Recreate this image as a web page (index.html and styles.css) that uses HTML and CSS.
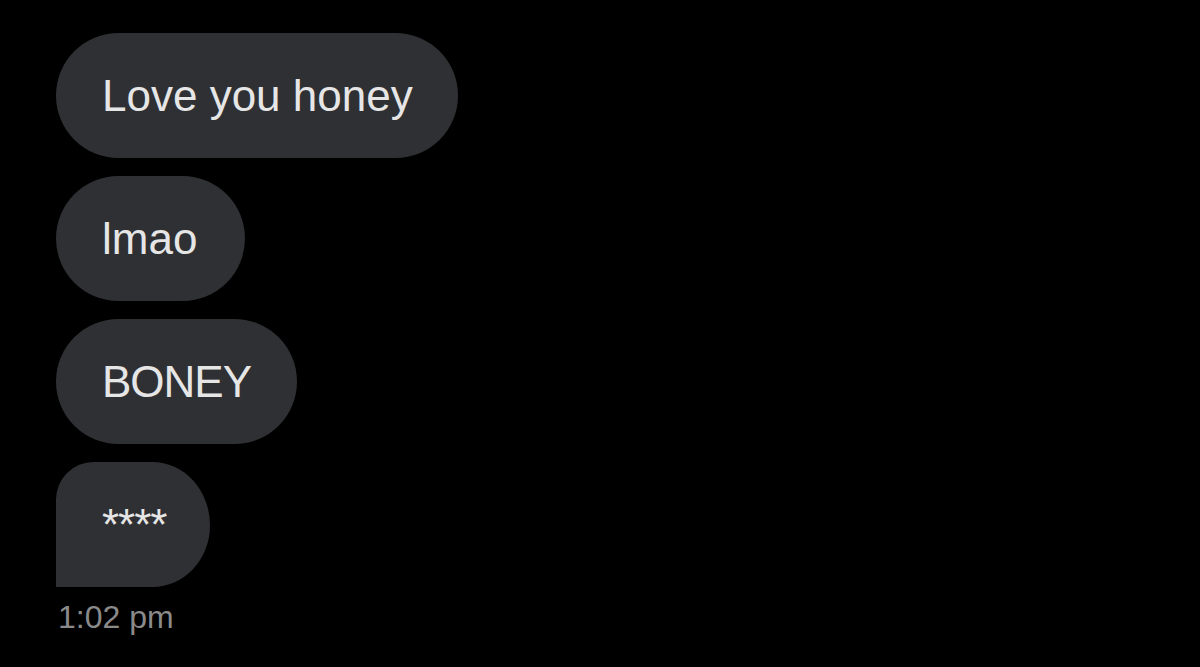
FILE: index.html
```html
<!DOCTYPE html>
<html lang="en">
<head>
  <meta charset="UTF-8" />
  <meta name="viewport" content="width=device-width, initial-scale=1.0"/>
  <title>Messages</title>
  <link rel="stylesheet" href="styles.css">
</head>
<body>
  <div class="conversa">
    <div class="bolha">Love you honey</div>
    <div class="bolha curta">lmao</div>
    <div class="bolha caps">BONEY</div>
    <div class="bolha ultima"><span class="estrelas">****</span></div>
    <p class="hora">1:02 pm</p>
  </div>
</body>
</html>
```

FILE: styles.css
```css
body {
  margin: 0;
  background-color: black;
  font-family: "Liberation Sans", Arial, sans-serif;
  height: 667px;
  overflow: hidden;
}

.conversa {
  display: flex;
  flex-direction: column;
  align-items: flex-start;
  gap: 18px;
  padding: 33px 56px;
}

.bolha {
  background-color: #2f3033;
  color: #e6e6e6;
  font-size: 44px;
  line-height: 125px;
  height: 125px;
  padding: 0 45px 0 46px;
  border-radius: 63px;
  white-space: nowrap;
}

.curta { padding-right: 48px; }
.caps { letter-spacing: -1px; padding-right: 46px; }

.ultima {
  border-radius: 38px 58px 58px 0 / 38px 64px 62px 0;
  padding-right: 43px;
}

.estrelas {
  letter-spacing: -1px;
}

.hora {
  margin: -6px 0 0 2px;
  color: #8a8a8a;
  font-size: 32px;
  line-height: 36px;
}
```
